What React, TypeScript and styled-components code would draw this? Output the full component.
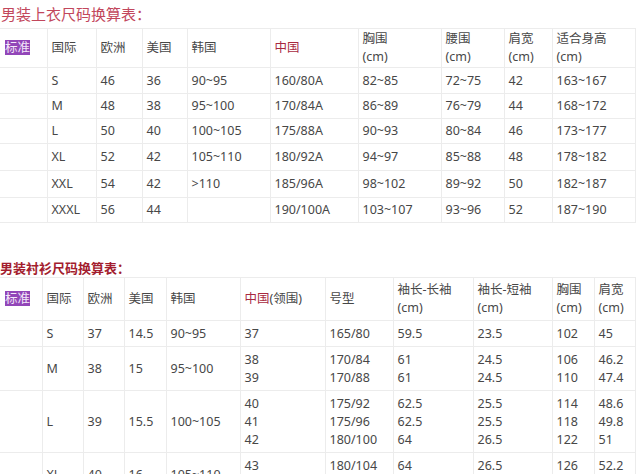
import React from "react";
import styled, { createGlobalStyle } from "styled-components";

const Global = createGlobalStyle`
  html, body { margin: 0; padding: 0; background: #fff; }
  body {
    font-family: "Noto Sans", "Noto Sans CJK SC", sans-serif;
    color: #474747;
    overflow: hidden;
  }
`;

const Page = styled.div`
  width: 640px;
  display: flex;
  flex-direction: column;
`;

const TitleLight = styled.div`
  font-size: 15px;
  line-height: 28px;
  color: #c2475c;
  padding-left: 1px;
`;

const TitleBold = styled.div`
  font-size: 13px;
  font-weight: 700;
  line-height: 18px;
  color: #a31d2e;
  margin-top: 36px;
  font-family: "Noto Sans CJK SC", sans-serif;
`;

const Table = styled.table`
  width: 635px;
  table-layout: fixed;
  border-collapse: collapse;
  font-size: 12.5px;
`;

const Row = styled.tr<{ $h: number }>`
  height: ${(p) => p.$h}px;
`;

const Cell = styled.td`
  border: 1px solid #ececec;
  padding: 0 4px;
  line-height: 18px;
  vertical-align: middle;
  white-space: nowrap;
  overflow: hidden;
  &:first-child { border-left: none; padding-left: 5px; }
`;

const Tag = styled.span`
  background: #9246b8;
  color: #f4e8fa;
  line-height: 15px;
  display: inline-block;
`;

const Red = styled.span`
  color: #a8293f;
`;

const Line = styled.div``;

type C = React.ReactNode | string[];

const renderCell = (c: C, i: number) => (
  <Cell key={i}>
    {Array.isArray(c) ? c.map((l, j) => <Line key={j}>{l}</Line>) : c}
  </Cell>
);

const t1Cols = [47, 49, 46, 45, 83, 88, 83, 63, 48, 83];
const t1Head: C[] = [
  <Tag>标准</Tag>,
  "国际",
  "欧洲",
  "美国",
  "韩国",
  <Red>中国</Red>,
  ["胸围", "(cm)"],
  ["腰围", "(cm)"],
  ["肩宽", "(cm)"],
  ["适合身高", "(cm)"],
];
const t1Rows: C[][] = [
  ["", "S", "46", "36", "90~95", "160/80A", "82~85", "72~75", "42", "163~167"],
  ["", "M", "48", "38", "95~100", "170/84A", "86~89", "76~79", "44", "168~172"],
  ["", "L", "50", "40", "100~105", "175/88A", "90~93", "80~84", "46", "173~177"],
  ["", "XL", "52", "42", "105~110", "180/92A", "94~97", "85~88", "48", "178~182"],
  ["", "XXL", "54", "42", ">110", "185/96A", "98~102", "89~92", "50", "182~187"],
  ["", "XXXL", "56", "44", "", "190/100A", "103~107", "93~96", "52", "187~190"],
];
const t1Heights = [26, 25, 25, 27, 27, 25];

const t2Cols = [42, 41, 41, 42, 74, 85, 68, 80, 79, 42, 41];
const t2Head: C[] = [
  <Tag>标准</Tag>,
  "国际",
  "欧洲",
  "美国",
  "韩国",
  <><Red>中国</Red>(领围)</>,
  "号型",
  ["袖长-长袖", "(cm)"],
  ["袖长-短袖", "(cm)"],
  ["胸围", "(cm)"],
  ["肩宽", "(cm)"],
];
const t2Rows: C[][] = [
  ["", "S", "37", "14.5", "90~95", "37", "165/80", "59.5", "23.5", "102", "45"],
  ["", "M", "38", "15", "95~100", ["38", "39"], ["170/84", "170/88"], ["61", "61"], ["24.5", "24.5"], ["106", "110"], ["46.2", "47.4"]],
  ["", "L", "39", "15.5", "100~105", ["40", "41", "42"], ["175/92", "175/96", "180/100"], ["62.5", "62.5", "64"], ["25.5", "25.5", "26.5"], ["114", "118", "122"], ["48.6", "49.8", "51"]],
  ["", "XL", "40", "16", "105~110", ["43", "44"], ["180/104", "180/108"], ["64", "64"], ["26.5", "26.5"], ["126", "130"], ["52.2", "53.4"]],
];
const t2Heights = [26, 44, 62, 44];

const SizeTable: React.FC<{ cols: number[]; head: C[]; headH: number; rows: C[][]; heights: number[] }> = ({ cols, head, headH, rows, heights }) => (
  <Table>
    <colgroup>
      {cols.map((w, i) => (
        <col key={i} style={{ width: w }} />
      ))}
    </colgroup>
    <tbody>
      <Row $h={headH}>{head.map(renderCell)}</Row>
      {rows.map((r, i) => (
        <Row key={i} $h={heights[i]}>
          {r.map(renderCell)}
        </Row>
      ))}
    </tbody>
  </Table>
);

export default function App() {
  return (
    <Page>
      <Global />
      <TitleLight>男装上衣尺码换算表：</TitleLight>
      <SizeTable cols={t1Cols} head={t1Head} headH={39} rows={t1Rows} heights={t1Heights} />
      <TitleBold>男装衬衫尺码换算表：</TitleBold>
      <SizeTable cols={t2Cols} head={t2Head} headH={43} rows={t2Rows} heights={t2Heights} />
    </Page>
  );
}
